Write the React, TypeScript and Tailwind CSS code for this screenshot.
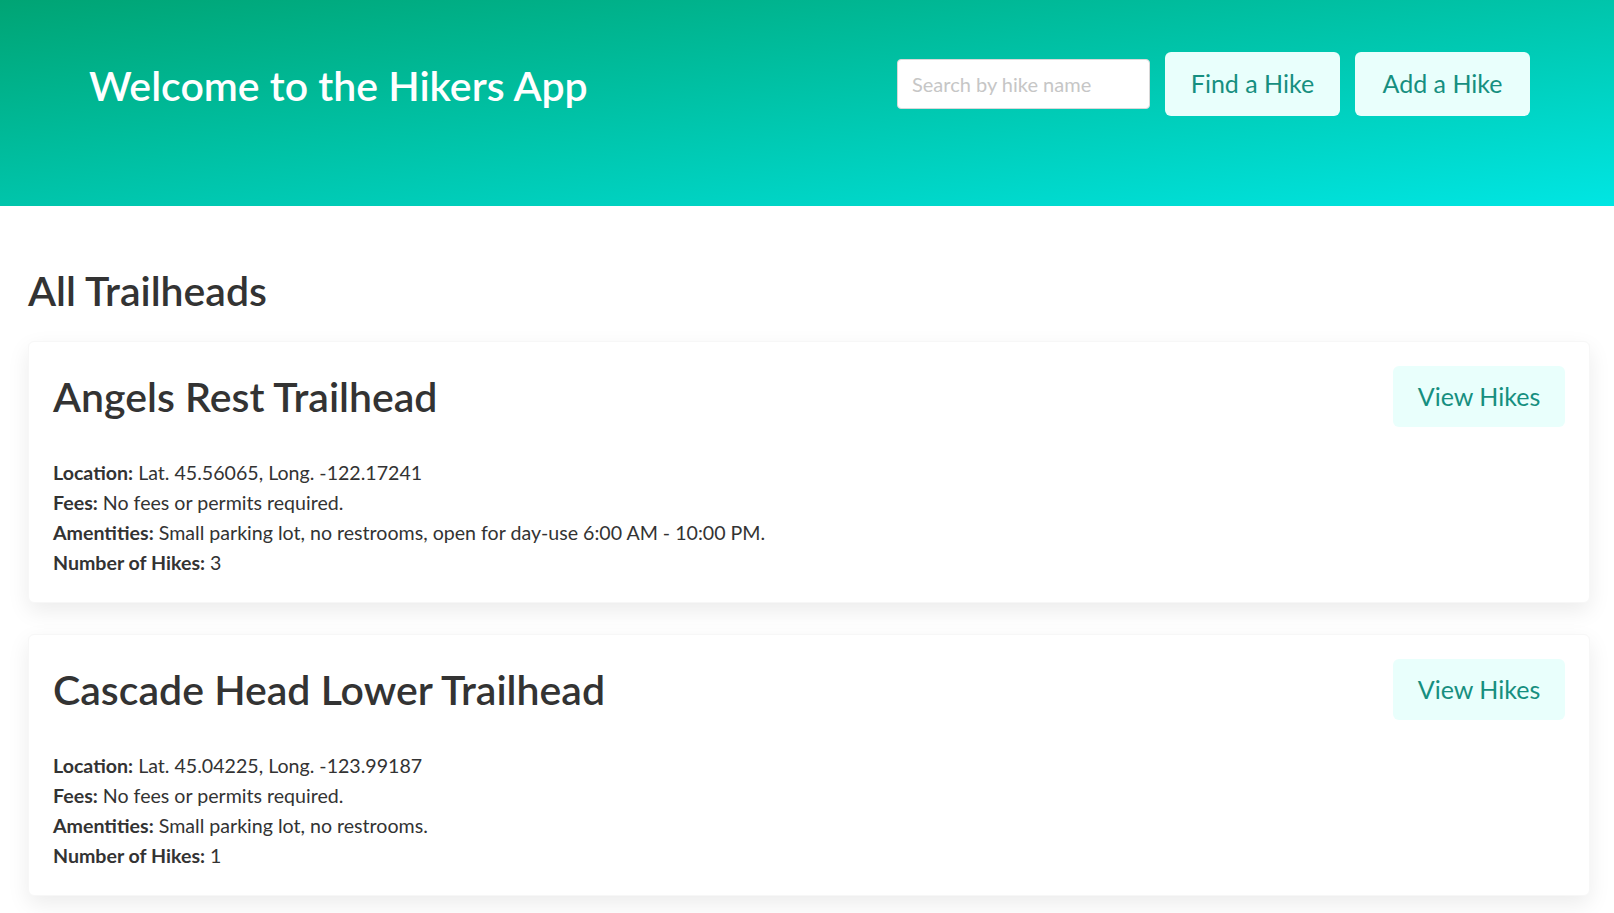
import React from "react";

const trailheads = [
  {
    name: "Angels Rest Trailhead",
    location: "Lat. 45.56065, Long. -122.17241",
    fees: "No fees or permits required.",
    amenities: "Small parking lot, no restrooms, open for day-use 6:00 AM - 10:00 PM.",
    hikes: 3,
  },
  {
    name: "Cascade Head Lower Trailhead",
    location: "Lat. 45.04225, Long. -123.99187",
    fees: "No fees or permits required.",
    amenities: "Small parking lot, no restrooms.",
    hikes: 1,
  },
];

export default function App() {
  return (
    <div
      className="min-h-screen bg-white text-[#333333]"
      style={{ fontFamily: "Lato, 'Open Sans', sans-serif" }}
    >
      <header className="h-[206px] bg-linear-to-br from-[#00a474] to-[#00e6e3] flex items-start justify-between pl-[89px] pr-[84px] pt-[52px]">
        <h1 className="text-[41px] leading-[48px] text-white font-semibold mt-[10px]">
          Welcome to the Hikers App
        </h1>
        <div className="flex items-center gap-[15px]">
          <input
            placeholder="Search by hike name"
            className="w-[253px] h-[50px] rounded-[4px] bg-white border border-[#d8d8d8] px-[14px] text-[20px] placeholder:text-[#c6c6c6] outline-none"
          />
          <button className="w-[175px] h-[64px] rounded-[6px] bg-[#e9fffc] text-[#168f80] text-[25px]">
            Find a Hike
          </button>
          <button className="w-[175px] h-[64px] rounded-[6px] bg-[#e9fffc] text-[#168f80] text-[25px]">
            Add a Hike
          </button>
        </div>
      </header>
      <main className="pl-[28px] pr-[24px] pt-[61px] pb-[18px]">
        <h2 className="text-[41px] leading-[48px] font-semibold mb-[26px]">All Trailheads</h2>
        <div className="flex flex-col gap-[31px]">
          {trailheads.map((t) => (
            <div
              key={t.name}
              className="bg-white rounded-[6px] p-[24px] shadow-[0_8px_22px_rgba(0,0,0,0.08)] border border-[#f7f7f7]"
            >
              <div className="flex items-center justify-between h-[61px]">
                <h3 className="text-[41px] leading-[48px] font-semibold">{t.name}</h3>
                <button className="w-[172px] h-[61px] rounded-[6px] bg-[#e9fffc] text-[#168f80] text-[25px]">
                  View Hikes
                </button>
              </div>
              <div className="mt-[31px] text-[19.6px] leading-[30px]">
                <p>
                  <b>Location:</b> {t.location}
                </p>
                <p>
                  <b>Fees:</b> {t.fees}
                </p>
                <p>
                  <b>Amentities:</b> {t.amenities}
                </p>
                <p>
                  <b>Number of Hikes:</b> {t.hikes}
                </p>
              </div>
            </div>
          ))}
        </div>
      </main>
    </div>
  );
}
